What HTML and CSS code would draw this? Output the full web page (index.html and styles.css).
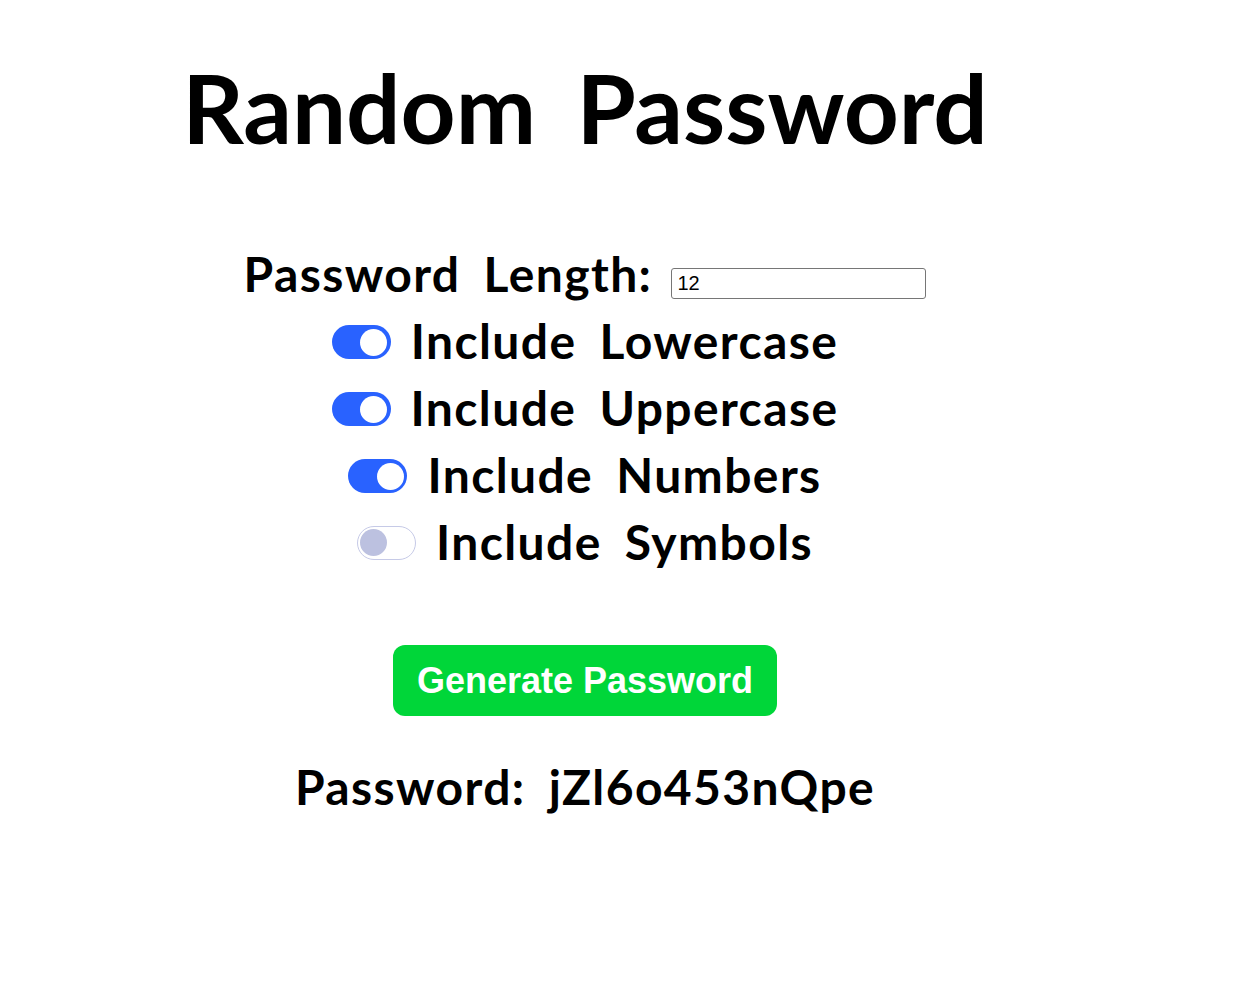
FILE: index.html
```html
<!DOCTYPE html>
<html lang="en">
<head>
<meta charset="utf-8">
<title>Random Password</title>
<link rel="stylesheet" href="styles.css">
</head>
<body>
<main class="app">
  <h1 class="title">Random Password</h1>
  <div class="options">
    <div class="row">
      <label class="label" for="len">Password Length:</label><input class="length-input" id="len" type="text" value="12">
    </div>
    <div class="row"><span class="toggle on"><span class="knob"></span></span><span class="label">Include Lowercase</span></div>
    <div class="row"><span class="toggle on"><span class="knob"></span></span><span class="label">Include Uppercase</span></div>
    <div class="row"><span class="toggle on"><span class="knob"></span></span><span class="label">Include Numbers</span></div>
    <div class="row"><span class="toggle off"><span class="knob"></span></span><span class="label">Include Symbols</span></div>
  </div>
  <div class="actions">
    <button class="generate" type="button">Generate Password</button>
  </div>
  <p class="result">Password: jZl6o453nQpe</p>
</main>
</body>
</html>
```
FILE: styles.css
```css
html, body {
  margin: 0;
  padding: 0;
  background: #ffffff;
}

.app {
  width: 1170px;
  padding-top: 40px;
  font-family: "Comic Sans MS", "Lato", "DejaVu Sans", sans-serif;
  font-weight: 700;
  color: #000000;
  text-align: center;
}

.title {
  margin: 0;
  font-size: 96px;
  line-height: 134px;
  font-weight: 700;
  word-spacing: 17px;
}

.options {
  margin-top: 66px;
}

.row {
  font-size: 48px;
  line-height: 67px;
  white-space: nowrap;
  letter-spacing: 1.4px;
  word-spacing: 10px;
}

.label {
  vertical-align: baseline;
}

.length-input {
  box-sizing: border-box;
  width: 255px;
  height: 31px;
  margin-left: 19px;
  padding: 0 5px;
  border: 1px solid #767676;
  border-radius: 3px;
  font-family: "Liberation Sans", Arial, sans-serif;
  font-weight: 400;
  font-size: 20px;
  letter-spacing: 0;
  word-spacing: 0;
  color: #000;
  vertical-align: 2px;
}

.toggle {
  display: inline-block;
  position: relative;
  box-sizing: border-box;
  width: 59px;
  height: 34px;
  border-radius: 17px;
  margin-right: 20px;
  vertical-align: baseline;
}

.toggle .knob {
  position: absolute;
  top: 3.5px;
  width: 27px;
  height: 27px;
  border-radius: 50%;
}

.toggle.on {
  background: #2962ff;
}

.toggle.on .knob {
  right: 3.5px;
  background: #ffffff;
}

.toggle.off {
  background: #ffffff;
  border: 1.5px solid #c6cae7;
}

.toggle.off .knob {
  top: 2px;
  left: 2.5px;
  background: #bcc1e0;
}

.actions {
  margin-top: 70px;
}

.generate {
  box-sizing: border-box;
  height: 71px;
  padding: 0 24px;
  border: none;
  border-radius: 12px;
  background: #00d639;
  color: #ffffff;
  font-family: "Liberation Sans", Arial, sans-serif;
  font-weight: 700;
  font-size: 36px;
  line-height: 41px;
  cursor: pointer;
}

.result {
  margin: 37px 0 0;
  font-size: 48px;
  line-height: 67px;
  letter-spacing: 1.4px;
  word-spacing: 10px;
}
```
